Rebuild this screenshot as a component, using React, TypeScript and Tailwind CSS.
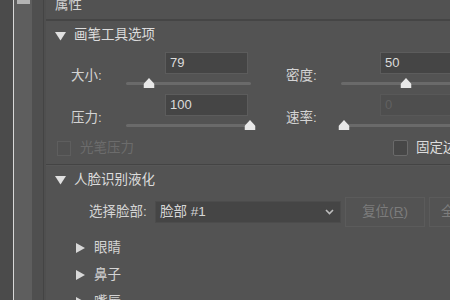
import React from 'react';

const font = "font-['Liberation_Sans','Noto_Sans_CJK_SC',sans-serif]";

const Thumb: React.FC = () => (
  <svg width="11" height="10" viewBox="0 0 11 10" className="absolute top-[4px] -translate-x-1/2">
    <path d="M5.5 0 L11 6 L11 10 L0 10 L0 6 Z" fill="#e8e8e8" />
  </svg>
);

const Slider: React.FC<{ at: number }> = ({ at }) => (
  <div className="relative h-[18px]">
    <div className="absolute left-0 right-0 top-[8px] h-[3px] rounded-full bg-[#6a6a6a]" />
    <div className="absolute top-0" style={{ left: `${at}%` }}>
      <Thumb />
    </div>
  </div>
);

const Field: React.FC<{ label: string; value: string; at: number; disabled?: boolean }> = ({ label, value, at, disabled }) => (
  <div className="flex w-[180px] shrink-0">
    <div className="w-[55px] shrink-0 flex items-center pt-[8px] text-[13.5px] text-[#d4d4d4]">{label}</div>
    <div className="w-[125px] shrink-0 flex flex-col">
      <div className="flex justify-end pr-[3px]">
        <div
          className={`w-[83px] h-[22px] border flex items-center px-[4px] text-[13px] ${
            disabled ? 'border-[#585858] bg-[#4e4e4e] text-[#616161]' : 'border-[#5c5c5c] bg-[#454545] text-[#dcdcdc]'
          }`}
        >
          {value}
        </div>
      </div>
      <Slider at={at} />
    </div>
  </div>
);

const Caret: React.FC<{ open?: boolean }> = ({ open }) => (
  <svg width="11" height="10" viewBox="0 0 11 10" className="shrink-0">
    {open ? <path d="M0 1 H11 L5.5 9.5 Z" fill="#e0e0e0" /> : <path d="M1 0 L10 5 L1 10 Z" fill="#d8d8d8" />}
  </svg>
);

export default function App() {
  return (
    <div className={`w-[450px] h-[300px] overflow-hidden flex bg-[#535353] ${font}`}>
      {/* left edge and scroll bar */}
      <div className="w-[13px] shrink-0 bg-[#4b4b4b]" />
      <div className="w-[1px] shrink-0 bg-[#d8d8d8]" />
      <div className="w-[18px] shrink-0 bg-[#5e5e5e] flex justify-center">
        <div className="w-[13px] h-[4px] bg-[#b4b4b4]" />
      </div>
      <div className="w-[11px] shrink-0 bg-[#4f4f4f]" />
      <div className="w-[1px] shrink-0 bg-[#444444]" />
      <div className="w-[2px] shrink-0 bg-[#4f4f4f]" />

      <div className="flex-1 min-w-0 flex flex-col">
        <div className="h-[21px] shrink-0 overflow-hidden border-b-2 border-[#454545] bg-[#525252]">
          <div className="pl-[9px] -mt-[3px] text-[13.5px] leading-[16px] text-[#d4d4d4]">属性</div>
        </div>

        <div className="h-[29px] shrink-0 flex items-center gap-[8px] pl-[9px] text-[13.5px] text-[#dcdcdc]">
          <Caret open />
          <span>画笔工具选项</span>
        </div>

        <div className="pl-[25px] mt-[2px] flex flex-col gap-[2px] whitespace-nowrap">
          <div className="flex gap-[35px]">
            <Field label="大小:" value="79" at={18} />
            <Field label="密度:" value="50" at={52} />
          </div>
          <div className="flex gap-[35px]">
            <Field label="压力:" value="100" at={99} />
            <Field label="速率:" value="0" at={2} disabled />
          </div>
        </div>

        <div className="flex items-center h-[22px] mt-[4px] whitespace-nowrap">
          <div className="flex items-center w-[347px] shrink-0 pl-[11px] gap-[9px]">
            <div className="w-[14px] h-[15px] border border-[#5e5e5e] bg-[#515151]" />
            <span className="text-[13.5px] text-[#6c6c6c]">光笔压力</span>
          </div>
          <div className="flex items-center gap-[8px]">
            <div className="w-[15px] h-[16px] shrink-0 border border-[#6a6a6a] bg-[#474747] rounded-[2px]" />
            <span className="text-[13.5px] text-[#dcdcdc]">固定边缘</span>
          </div>
        </div>

        <div className="mt-[6px] h-[2px] shrink-0 border-t border-[#444444] bg-[#575757]" />

        <div className="h-[28px] shrink-0 flex items-center gap-[8px] pl-[9px] text-[13.5px] text-[#dcdcdc]">
          <Caret open />
          <span>人脸识别液化</span>
        </div>

        <div className="flex items-center mt-[3px] pl-[43px] whitespace-nowrap">
          <span className="w-[66px] shrink-0 text-[13.5px] text-[#d4d4d4]">选择脸部:</span>
          <div className="w-[186px] h-[22px] shrink-0 flex items-center justify-between bg-[#454545] border border-[#4c4c4c] pl-[4px] pr-[6px] text-[13.5px] text-[#d6d6d6]">
            <span>脸部 #1</span>
            <svg width="9" height="6" viewBox="0 0 9 6">
              <path d="M1 1 L4.5 4.5 L8 1" stroke="#bdbdbd" strokeWidth="1.6" fill="none" />
            </svg>
          </div>
          <div className="ml-[4px] w-[80px] h-[30px] shrink-0 flex items-center justify-center border border-[#5b5b5b] text-[13.5px] text-[#7c7c7c]">
            复位(<span className="underline">R</span>)
          </div>
          <div className="ml-[4px] w-[80px] h-[30px] shrink-0 flex items-center pl-[11px] border border-[#5b5b5b] text-[13.5px] text-[#7c7c7c]">
            全部
          </div>
        </div>

        <div className="flex flex-col pl-[29px] mt-[7px]">
          {['眼睛', '鼻子', '嘴唇'].map((t) => (
            <div key={t} className="h-[27px] shrink-0 flex items-center gap-[8px] text-[13.5px] text-[#d4d4d4]">
              <Caret />
              <span>{t}</span>
            </div>
          ))}
        </div>
      </div>
    </div>
  );
}
